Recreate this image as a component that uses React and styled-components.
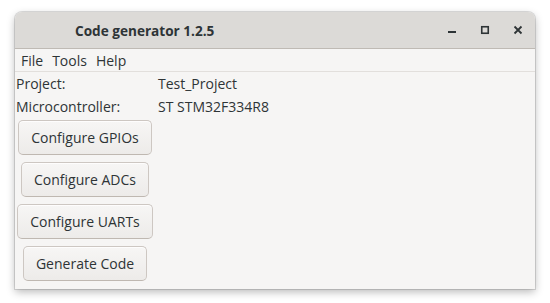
import React from "react";
import styled, { createGlobalStyle } from "styled-components";

const Global = createGlobalStyle`
  html, body { margin: 0; padding: 0; background: #ffffff; }
  body { font-family: "Open Sans", "Noto Sans", sans-serif; }
`;

const Page = styled.div`
  width: 550px;
  height: 303px;
  padding: 12px 0 0 15px;
  box-sizing: border-box;
`;

const Window = styled.div`
  width: 520px;
  height: 277px;
  display: flex;
  flex-direction: column;
  background: #f6f5f4;
  border-radius: 7px 7px 0 0;
  box-shadow: 0 0 0 1px rgba(0,0,0,0.12), 0 3px 9px rgba(0,0,0,0.28);
  overflow: hidden;
`;

const TitleBar = styled.div`
  height: 36px;
  flex: none;
  display: flex;
  align-items: center;
  background: #dcdad7;
  border-bottom: 1px solid #bfbab4;
  padding-left: 60px;
  padding-right: 1px;
`;

const Title = styled.div`
  flex: 1;
  font-weight: 700;
  font-size: 13.6px;
  color: #2e3436;
`;

const WinBtn = styled.div`
  width: 33px;
  height: 24px;
  display: flex;
  align-items: center;
  justify-content: center;
  color: #2e3436;
`;

const MenuBar = styled.div`
  height: 22px;
  flex: none;
  display: flex;
  align-items: center;
  gap: 9px;
  padding-left: 6px;
  border-bottom: 1px solid #e2dfdc;
`;

const MenuItem = styled.span`
  font-size: 14px;
  color: #2e3436;
`;

const InfoGrid = styled.div`
  display: grid;
  grid-template-columns: 142px auto;
  grid-auto-rows: 23px;
  align-items: center;
  padding-left: 1px;
  font-size: 14px;
  color: #2e3436;
`;

const ButtonColumn = styled.div`
  width: 136px;
  margin: 2px 0 0 2px;
  display: flex;
  flex-direction: column;
  align-items: center;
  gap: 7px;
`;

const Button = styled.button`
  height: 35px;
  padding: 0 ${p => p.$pad}px;
  box-sizing: border-box;
  white-space: nowrap;
  font-family: "Open Sans", "Noto Sans", sans-serif;
  font-size: 14px;
  color: #2e3436;
  background: linear-gradient(#f7f6f5, #edebe9);
  border: 1px solid #cdc7c2;
  border-bottom-color: #bfb8b1;
  border-radius: 5px;
  box-shadow: inset 0 1px rgba(255,255,255,0.8);
`;

export default function App() {
  return (
    <>
      <Global />
      <Page>
        <Window>
          <TitleBar>
            <Title>Code generator 1.2.5</Title>
            <WinBtn>
              <svg width="10" height="10" viewBox="0 0 10 10"><rect x="1" y="6" width="8" height="2" fill="#2e3436" /></svg>
            </WinBtn>
            <WinBtn>
              <svg width="10" height="10" viewBox="0 0 10 10"><rect x="1.75" y="1.75" width="6.5" height="6.5" fill="none" stroke="#2e3436" strokeWidth="1.6" /></svg>
            </WinBtn>
            <WinBtn>
              <svg width="10" height="10" viewBox="0 0 10 10"><path d="M1.5 1.5 L8.5 8.5 M8.5 1.5 L1.5 8.5" stroke="#2e3436" strokeWidth="1.8" /></svg>
            </WinBtn>
          </TitleBar>
          <MenuBar>
            <MenuItem>File</MenuItem>
            <MenuItem>Tools</MenuItem>
            <MenuItem>Help</MenuItem>
          </MenuBar>
          <InfoGrid>
            <span>Project:</span>
            <span>Test_Project</span>
            <span>Microcontroller:</span>
            <span>ST STM32F334R8</span>
          </InfoGrid>
          <ButtonColumn>
            <Button $pad={12}>Configure GPIOs</Button>
            <Button $pad={12}>Configure ADCs</Button>
            <Button $pad={12}>Configure UARTs</Button>
            <Button $pad={12}>Generate Code</Button>
          </ButtonColumn>
        </Window>
      </Page>
    </>
  );
}
